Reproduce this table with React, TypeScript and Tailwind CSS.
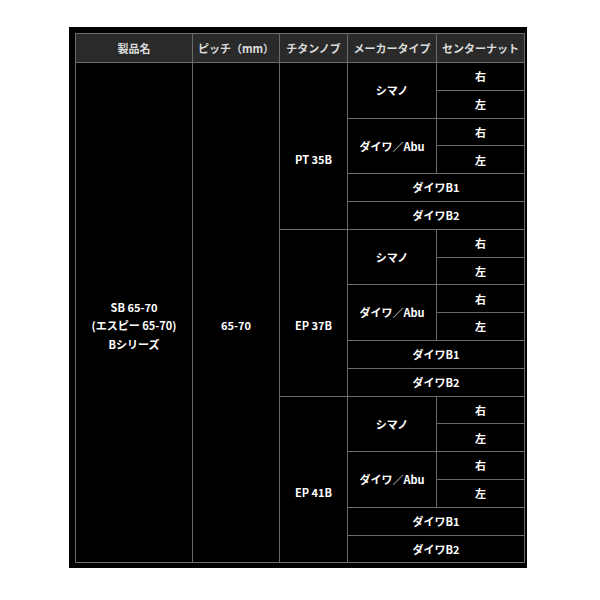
const knobs = ['PT 35B', 'EP 37B', 'EP 41B']

const th =
  'border border-[#6b6b6b] bg-[#2a2a2a] text-[#dcdcdc] font-bold text-[11px] text-center align-middle p-0'
const td =
  'border border-[#6b6b6b] text-white font-bold text-[11px] text-center align-middle p-0'

function KnobGroup({ name, first }: { name: string; first: boolean }) {
  return (
    <>
      <tr className="h-[27.8px]">
        {first && (
          <>
            <td rowSpan={18} className={`${td} pt-[26px] leading-[18.5px]`}>
              SB 65-70
              <br />
              (エスピー 65-70)
              <br />
              Bシリーズ
            </td>
            <td rowSpan={18} className={`${td} pt-[26px]`}>
              65-70
            </td>
          </>
        )}
        <td rowSpan={6} className={`${td} pt-[26px]`}>
          {name}
        </td>
        <td rowSpan={2} className={td}>
          シマノ
        </td>
        <td className={td}>右</td>
      </tr>
      <tr className="h-[27.8px]">
        <td className={td}>左</td>
      </tr>
      <tr className="h-[27.8px]">
        <td rowSpan={2} className={td}>
          ダイワ／Abu
        </td>
        <td className={td}>右</td>
      </tr>
      <tr className="h-[27.8px]">
        <td className={td}>左</td>
      </tr>
      <tr className="h-[27.8px]">
        <td colSpan={2} className={td}>
          ダイワB1
        </td>
      </tr>
      <tr className="h-[27.8px]">
        <td colSpan={2} className={td}>
          ダイワB2
        </td>
      </tr>
    </>
  )
}

export default function App() {
  return (
    <div
      className="min-h-screen bg-white pt-[27px] pl-[69px]"
      style={{ fontFamily: '"Noto Sans CJK JP", "Noto Sans", sans-serif' }}
    >
      <div className="w-[458px] h-[541px] bg-black pt-[6px] pl-[6px]">
        <table className="table-fixed border-collapse w-[450px]">
          <colgroup>
            <col className="w-[117px]" />
            <col className="w-[87px]" />
            <col className="w-[68px]" />
            <col className="w-[89px]" />
            <col className="w-[88px]" />
          </colgroup>
          <thead>
            <tr className="h-[29px]">
              <th className={th}>製品名</th>
              <th className={th}>ピッチ（mm）</th>
              <th className={th}>チタンノブ</th>
              <th className={th}>メーカータイプ</th>
              <th className={th}>センターナット</th>
            </tr>
          </thead>
          <tbody>
            {knobs.map((k, i) => (
              <KnobGroup key={k} name={k} first={i === 0} />
            ))}
          </tbody>
        </table>
      </div>
    </div>
  )
}
